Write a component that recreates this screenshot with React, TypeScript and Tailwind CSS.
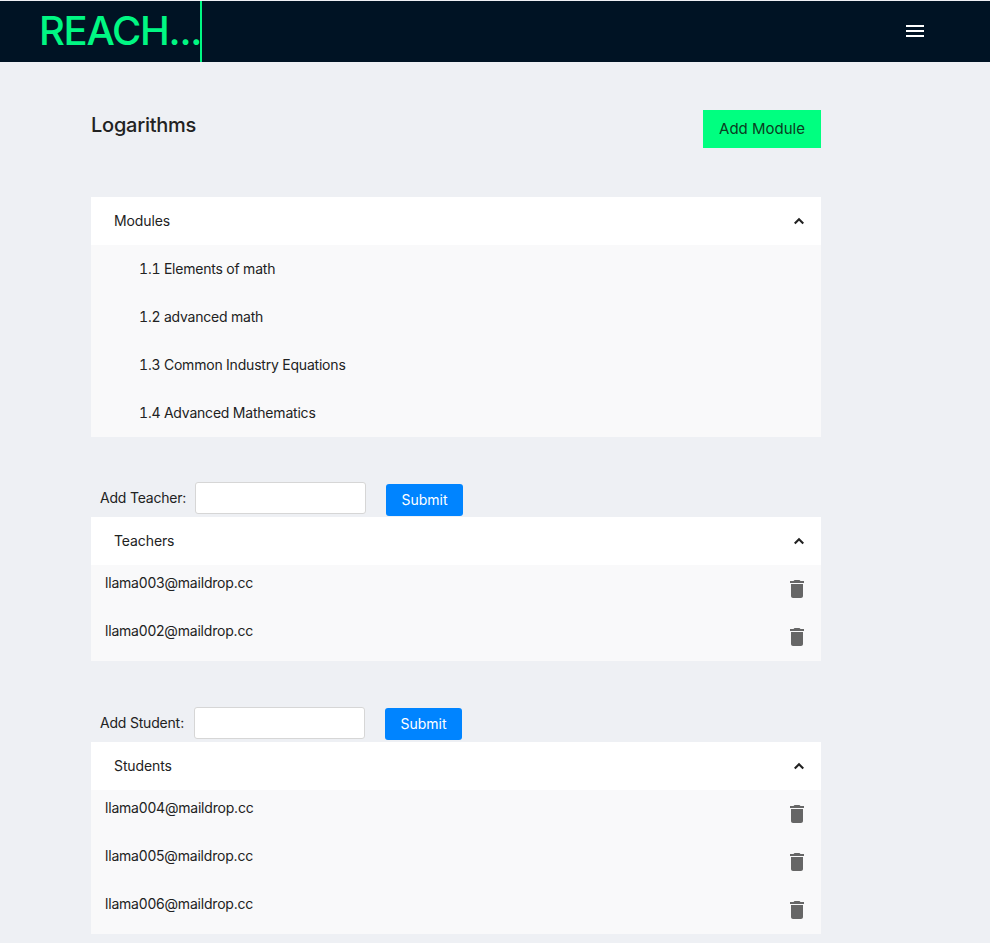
const Chevron = () => (
  <svg viewBox="0 0 24 24" className="w-5 h-5 fill-[#222222]" aria-hidden="true">
    <path d="M12 8l-6 6 1.8 1.8L12 11.6l4.2 4.2L18 14z" />
  </svg>
);

const Trash = () => (
  <svg viewBox="0 0 24 24" className="w-6 h-6 fill-[#666666]" aria-hidden="true">
    <path d="M6 19c0 1.1.9 2 2 2h8c1.1 0 2-.9 2-2V7H6v12zM19 4h-3.5l-1-1h-5l-1 1H5v2h14V4z" />
  </svg>
);

const AccordionHead = ({ title }: { title: string }) => (
  <div className="h-12 bg-white flex items-center justify-between pl-[23px] pr-[12px]">
    <span className="tracking-[-0.1px]">{title}</span>
    <Chevron />
  </div>
);

const EmailRow = ({ email }: { email: string }) => (
  <div className="h-12 flex justify-between pl-[14px] pr-3">
    <span className="pt-[8px] leading-[20px] tracking-[-0.2px]">{email}</span>
    <span className="pt-[12px]">
      <Trash />
    </span>
  </div>
);

const People = ({
  label,
  title,
  emails,
  shifted,
}: {
  label: string;
  title: string;
  emails: string[];
  shifted?: boolean;
}) => (
  <section>
    <div className="flex h-[35px] pl-[9px]">
      <span
        className={
          shifted
            ? "w-[94px] h-[32px] flex items-center justify-between pr-[10px] whitespace-nowrap tracking-[-0.2px]"
            : "w-[95px] h-[32px] flex items-center justify-between pr-[11px] whitespace-nowrap tracking-[-0.2px]"
        }
      >
        <span>{label}</span>
        <span>:</span>
      </span>
      <input className="w-[171px] h-[32px] bg-white border border-[#d6d6d6] rounded-[3px]" />
      <button
        className={
          shifted
            ? "ml-5 mt-[1px] w-[77px] h-[32px] bg-[#0084ff] rounded-[3px] text-white"
            : "ml-5 mt-[2px] w-[77px] h-[32px] bg-[#0084ff] rounded-[3px] text-white"
        }
      >
        Submit
      </button>
    </div>
    <AccordionHead title={title} />
    <div className="bg-[#f9f9fa]">
      {emails.map((e) => (
        <EmailRow key={e} email={e} />
      ))}
    </div>
  </section>
);

export default function App() {
  return (
    <div className="min-h-[943px] bg-[#eef0f4] pt-px text-sm text-[#222222] font-['Inter',sans-serif]">
      <header className="h-[61px] bg-[#001324] flex items-center justify-between">
        <div className="w-[202px] h-full border-r-2 border-[#00f783] pl-[39px] pb-[2px] flex items-center">
          <span className="text-[40px] leading-none font-[550] text-[#00f783] tracking-[-1.3px] whitespace-nowrap">
            REACH...
          </span>
        </div>
        <div className="mr-[66px] mb-[2px] w-[18px] h-[14px] flex flex-col justify-between py-px">
          <span className="h-[2px] bg-white" />
          <span className="h-[2px] bg-white" />
          <span className="h-[2px] bg-white" />
        </div>
      </header>

      <main className="w-[730px] ml-[91px] pb-[9px]">
        <div className="flex justify-between items-start pt-[48px] h-[135px]">
          <h1 className="text-xl font-medium leading-[30px] text-[#222222] tracking-[-0.25px]">Logarithms</h1>
          <button className="w-[118px] h-[38px] bg-[#00ff80] text-[15px] text-[#0b3d22]">
            Add Module
          </button>
        </div>

        <AccordionHead title="Modules" />
        <div className="bg-[#f9f9fa]">
          {[
            "1.1 Elements of math",
            "1.2 advanced math",
            "1.3 Common Industry Equations",
            "1.4 Advanced Mathematics",
          ].map((m) => (
            <div key={m} className="h-12 flex items-center pl-[48px] tabular-nums tracking-[-0.2px]">
              {m}
            </div>
          ))}
        </div>

        <div className="mt-[45px]">
          <People
            label="Add Teacher"
            title="Teachers"
            emails={["llama003@maildrop.cc", "llama002@maildrop.cc"]}
          />
        </div>
        <div className="mt-[46px]">
          <People
            shifted
            label="Add Student"
            title="Students"
            emails={[
              "llama004@maildrop.cc",
              "llama005@maildrop.cc",
              "llama006@maildrop.cc",
            ]}
          />
        </div>
      </main>
    </div>
  );
}
